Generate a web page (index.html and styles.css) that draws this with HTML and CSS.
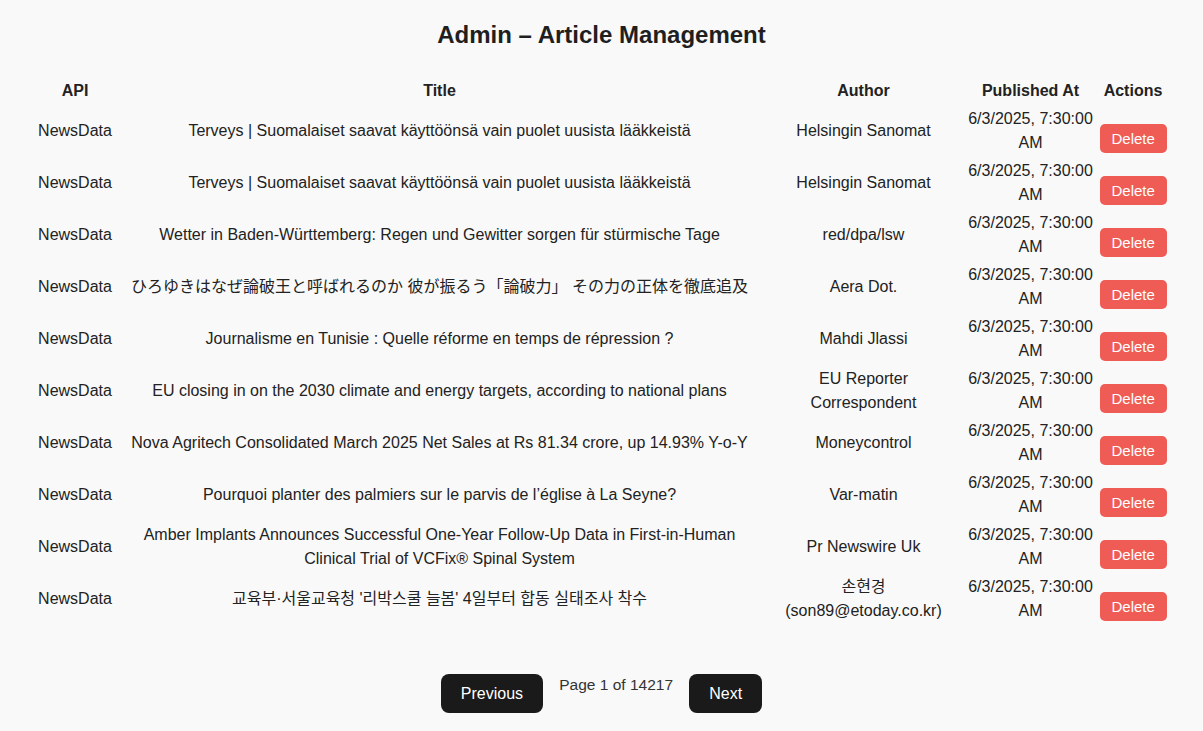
FILE: index.html
```html
<!DOCTYPE html>
<html lang="en">
<head>
<meta charset="utf-8">
<title>Admin – Article Management</title>
<link rel="stylesheet" href="styles.css">
</head>
<body>
<div class="page">
  <h1 class="title">Admin – Article Management</h1>
  <table class="articles">
    <colgroup>
      <col class="c-api">
      <col class="c-title">
      <col class="c-author">
      <col class="c-date">
      <col class="c-actions">
    </colgroup>
    <thead>
      <tr><th>API</th><th>Title</th><th>Author</th><th>Published At</th><th>Actions</th></tr>
    </thead>
    <tbody>
      <tr><td>NewsData</td><td>Terveys | Suomalaiset saavat käyttöönsä vain puolet uusista lääkkeistä</td><td>Helsingin Sanomat</td><td>6/3/2025, 7:30:00 AM</td><td class="act"><button class="del">Delete</button></td></tr>
      <tr><td>NewsData</td><td>Terveys | Suomalaiset saavat käyttöönsä vain puolet uusista lääkkeistä</td><td>Helsingin Sanomat</td><td>6/3/2025, 7:30:00 AM</td><td class="act"><button class="del">Delete</button></td></tr>
      <tr><td>NewsData</td><td>Wetter in Baden-Württemberg: Regen und Gewitter sorgen für stürmische Tage</td><td>red/dpa/lsw</td><td>6/3/2025, 7:30:00 AM</td><td class="act"><button class="del">Delete</button></td></tr>
      <tr><td>NewsData</td><td>ひろゆきはなぜ論破王と呼ばれるのか 彼が振るう「論破力」 その力の正体を徹底追及</td><td>Aera Dot.</td><td>6/3/2025, 7:30:00 AM</td><td class="act"><button class="del">Delete</button></td></tr>
      <tr><td>NewsData</td><td>Journalisme en Tunisie : Quelle réforme en temps de répression ?</td><td>Mahdi Jlassi</td><td>6/3/2025, 7:30:00 AM</td><td class="act"><button class="del">Delete</button></td></tr>
      <tr><td>NewsData</td><td>EU closing in on the 2030 climate and energy targets, according to national plans</td><td>EU Reporter Correspondent</td><td>6/3/2025, 7:30:00 AM</td><td class="act"><button class="del">Delete</button></td></tr>
      <tr><td>NewsData</td><td>Nova Agritech Consolidated March 2025 Net Sales at Rs 81.34 crore, up 14.93% Y-o-Y</td><td>Moneycontrol</td><td>6/3/2025, 7:30:00 AM</td><td class="act"><button class="del">Delete</button></td></tr>
      <tr><td>NewsData</td><td>Pourquoi planter des palmiers sur le parvis de l’église à La Seyne?</td><td>Var-matin</td><td>6/3/2025, 7:30:00 AM</td><td class="act"><button class="del">Delete</button></td></tr>
      <tr><td>NewsData</td><td>Amber Implants Announces Successful One-Year Follow-Up Data in First-in-Human Clinical Trial of VCFix® Spinal System</td><td>Pr Newswire Uk</td><td>6/3/2025, 7:30:00 AM</td><td class="act"><button class="del">Delete</button></td></tr>
      <tr><td>NewsData</td><td>교육부·서울교육청 '리박스쿨 늘봄' 4일부터 합동 실태조사 착수</td><td>손현경 (son89@etoday.co.kr)</td><td>6/3/2025, 7:30:00 AM</td><td class="act"><button class="del">Delete</button></td></tr>
    </tbody>
  </table>
  <div class="pager">
    <button class="pbtn">Previous</button>
    <span class="pinfo">Page 1 of 14217</span>
    <button class="pbtn">Next</button>
  </div>
</div>
</body>
</html>
```

FILE: styles.css
```css
html, body {
  margin: 0;
  padding: 0;
  background: #f9f9f9;
}

body {
  font-family: "Liberation Sans", Arial, "Noto Sans CJK JP", "Noto Sans CJK KR", sans-serif;
  font-size: 16px;
  line-height: 1.5;
  color: #222;
}

.page {
  padding: 17px 0 0;
}

.title {
  margin: 0 0 23px;
  font-size: 24px;
  line-height: 36px;
  font-weight: 700;
  text-align: center;
  color: #1f1f1f;
}

.articles {
  width: 1136px;
  margin: 0 auto;
  table-layout: fixed;
  border-spacing: 2px;
}

.c-api { width: 79px; }
.c-title { width: 646px; }
.c-author { width: 198px; }
.c-date { width: 132px; }
.c-actions { width: 69px; }

.articles th,
.articles td {
  padding: 1px;
  text-align: center;
  vertical-align: middle;
}

.articles th {
  font-weight: 700;
}

.articles .act {
  vertical-align: top;
}

.del {
  display: block;
  margin: 17px auto 0;
  padding: 6px 12px;
  border: 0;
  border-radius: 5px;
  background: #ef5c55;
  color: #fff;
  font-family: inherit;
  font-size: 15px;
  line-height: normal;
  cursor: pointer;
}

.pager {
  display: flex;
  justify-content: center;
  align-items: flex-start;
  gap: 16px;
  margin-top: 48px;
}

.pbtn {
  padding: 0.6em 1.2em;
  border: 1px solid transparent;
  border-radius: 8px;
  background: #1a1a1a;
  color: #fff;
  font-family: inherit;
  font-size: 16px;
  line-height: normal;
  cursor: pointer;
}

.pinfo {
  font-size: 15.5px;
  line-height: 22px;
  color: #333;
}
```
